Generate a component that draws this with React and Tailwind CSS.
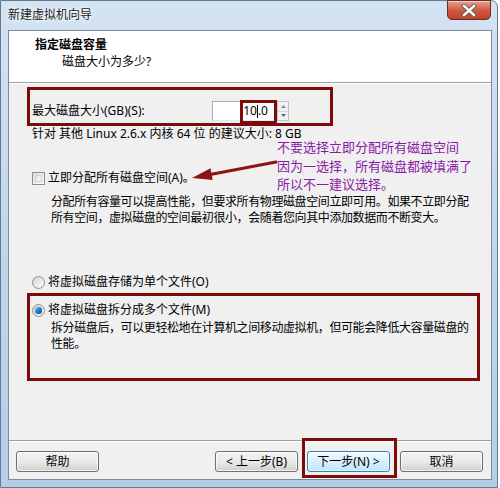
import React from 'react';

const FONT = "font-['Noto_Sans','Noto_Sans_CJK_SC',sans-serif]";

function CloseButton() {
  return (
    <div className="mt-[-1px] mr-[1px] ml-auto w-[44px] h-[20px] rounded-b-[5px] border border-[#6b2a22] bg-gradient-to-b from-[#e8a393] via-[#cf5a44] to-[#c0402a] flex items-center justify-center shadow-[inset_0_1px_0_rgba(255,255,255,0.5)]">
      <svg width="16" height="13" viewBox="0 0 16 13">
        <path d="M3 2 L13 11 M13 2 L3 11" stroke="#5a5a5a" strokeWidth="4.2" strokeLinecap="square" />
        <path d="M3 2 L13 11 M13 2 L3 11" stroke="#ffffff" strokeWidth="2.4" strokeLinecap="square" />
      </svg>
    </div>
  );
}

function Checkbox() {
  return (
    <span className="w-[13px] h-[13px] border border-[#8e8f8f] bg-gradient-to-br from-[#dcdcdc] to-[#fbfbfb] p-[2px] flex">
      <span className="flex-1 border border-[#d0d0d0] bg-gradient-to-br from-[#e3e3e3] to-[#f6f6f6]" />
    </span>
  );
}

function Radio({ checked }) {
  return (
    <span className="w-[13px] h-[13px] rounded-full border border-[#8e8f8f] bg-gradient-to-br from-[#d6d6d6] to-[#fbfbfb] flex items-center justify-center">
      {checked && (
        <span className="w-[7px] h-[7px] rounded-full bg-gradient-to-br from-[#8bd0f5] via-[#1d7ac4] to-[#0d4f93] shadow-[0_0_1px_#2a6fb0]" />
      )}
    </span>
  );
}

function WinButton({ children, primary, className = '' }) {
  return (
    <div
      className={`w-[83px] h-[21px] rounded-[3px] border flex items-center justify-center text-[12px] leading-none text-black ${
        primary
          ? 'border-[#3c7fb1] bg-gradient-to-b from-[#f1f9fe] via-[#d9f0fc] to-[#bee6fd] shadow-[inset_0_0_0_1px_rgba(255,255,255,0.6)]'
          : 'border-[#707070] bg-gradient-to-b from-[#f2f2f2] via-[#ebebeb] to-[#cfcfcf] shadow-[inset_0_0_0_1px_rgba(255,255,255,0.7)]'
      } ${className}`}
    >
      {children}
    </div>
  );
}

function Spinner() {
  return (
    <div className="w-[12px] h-[20px] flex flex-col border border-[#c3c3c3] bg-[#f2f2f2]">
      <div className="flex-1 flex items-center justify-center border-b border-[#d6d6d6]">
        <svg width="5" height="3" viewBox="0 0 5 3"><path d="M0 3 L2.5 0 L5 3Z" fill="#7a8ba6" /></svg>
      </div>
      <div className="flex-1 flex items-center justify-center">
        <svg width="5" height="3" viewBox="0 0 5 3"><path d="M0 0 L2.5 3 L5 0Z" fill="#4e6ea6" /></svg>
      </div>
    </div>
  );
}

export default function App() {
  return (
    <div className={`w-[500px] h-[488px] bg-white relative overflow-hidden ${FONT}`}>
      <div className="w-[498px] h-[488px] rounded-tr-[7px] border border-[#66788c] bg-gradient-to-b from-[#d4e3f3] via-[#c1d6ed] to-[#b6cde8] flex flex-col pl-[7px] pr-[5px]">
        {/* Title bar */}
        <div className="h-[29px] flex items-start">
          <span className="mt-[6px] text-[12px] leading-[16px] text-[#1a1a1a] [text-shadow:0_0_6px_#ffffff,0_0_3px_#ffffff]">
            新建虚拟机向导
          </span>
          <CloseButton />
        </div>

        {/* Client area */}
        <div className="flex-1 flex flex-col border border-[#7d8c9c] bg-[#f0f0f0] text-[12px] text-black">
          {/* Header */}
          <div className="h-[52px] bg-white border-b border-[#a0a0a0] flex flex-col">
            <div className="mt-[6px] ml-[26px] font-bold leading-[16px]">指定磁盘容量</div>
            <div className="mt-[1px] ml-[53px] leading-[16px]">磁盘大小为多少?</div>
          </div>

          {/* Body */}
          <div className="h-[357px] border-t border-white flex flex-col">
            <div className="mt-[3px] ml-[18px] w-[306px] h-[39px] border-[3px] border-[#7f0a0a] pt-[11px] pl-[2px] flex">
              <div className="w-[180px] h-[20px] flex items-center leading-[16px]">最大磁盘大小(GB)(S):</div>
              <div className="relative flex">
                <div className="w-[65px] h-[20px] bg-white border border-[#abadb3] border-b-[#e3e9ef] flex items-center justify-end pr-[8px] text-[12px] leading-none">
                  <span>10</span>
                  <span className="w-px h-[13px] bg-black" />
                  <span>.0</span>
                </div>
                <Spinner />
                <div className="absolute left-[28px] top-[-1px] w-[37px] h-[24px] border-[3px] border-[#7f0a0a]" />
              </div>
            </div>

            <div className="ml-[23px] leading-[16px] whitespace-nowrap">针对 其他 Linux 2.6.x 内核 64 位 的建议大小: 8 GB</div>

            <div className="mt-[28px] ml-[23px] h-[16px] flex items-center gap-[3px]">
              <Checkbox />
              <span className="leading-[16px]">立即分配所有磁盘空间(A)。</span>
            </div>

            <div className="mt-[8px] ml-[42px] leading-[16px] whitespace-nowrap tracking-[-0.4px]">
              分配所有容量可以提高性能，但要求所有物理磁盘空间立即可用。如果不立即分配
              <br />
              所有空间，虚拟磁盘的空间最初很小，会随着您向其中添加数据而不断变大。
            </div>

            <div className="mt-[48px] ml-[23px] h-[16px] flex items-center gap-[3px]">
              <Radio />
              <span className="leading-[16px]">将虚拟磁盘存储为单个文件(O)</span>
            </div>

            <div className="mt-[3px] ml-[18px] w-[453px] h-[88px] border-[3px] border-[#7f0a0a] pt-[6px] flex flex-col">
              <div className="ml-[2px] h-[16px] flex items-center gap-[3px]">
                <Radio checked />
                <span className="leading-[16px]">将虚拟磁盘拆分成多个文件(M)</span>
              </div>
              <div className="mt-[2px] ml-[21px] leading-[16px] whitespace-nowrap tracking-[-0.4px]">
                拆分磁盘后，可以更轻松地在计算机之间移动虚拟机，但可能会降低大容量磁盘的
                <br />
                性能。
              </div>
            </div>
          </div>

          {/* Footer */}
          <div className="flex-1 border-t border-[#a0a0a0] flex flex-col">
            <div className="border-t border-white flex pt-[9px] pl-[7px] pr-[8px]">
              <WinButton>帮助</WinButton>
              <WinButton className="ml-auto text-[#222]">&lt; 上一步(B)</WinButton>
              <WinButton primary className="ml-[9px]">下一步(N) &gt;</WinButton>
              <WinButton className="ml-[10px]">取消</WinButton>
            </div>
          </div>
        </div>

        <div className="h-[7px]" />
      </div>

      {/* Annotation overlays */}
      <div className="absolute left-[277px] top-[138px] text-[13px] leading-[18.5px] text-[#8a1aa6] whitespace-nowrap">
        不要选择立即分配所有磁盘空间
        <br />
        因为一选择，所有磁盘都被填满了
        <br />
        所以不一建议选择。
      </div>
      <svg className="absolute left-[188px] top-[156px]" width="92" height="32" viewBox="0 0 92 32">
        <path d="M23.6 18.2 L88 6" stroke="#8b1414" strokeWidth="3" strokeLinecap="round" />
        <path d="M4 22 L22.5 12.3 L24.7 24.1 Z" fill="#8b1414" />
      </svg>
      <div className="absolute left-[302px] top-[438px] w-[95px] h-[40px] border-[3px] border-[#7f0a0a]" />
    </div>
  );
}
